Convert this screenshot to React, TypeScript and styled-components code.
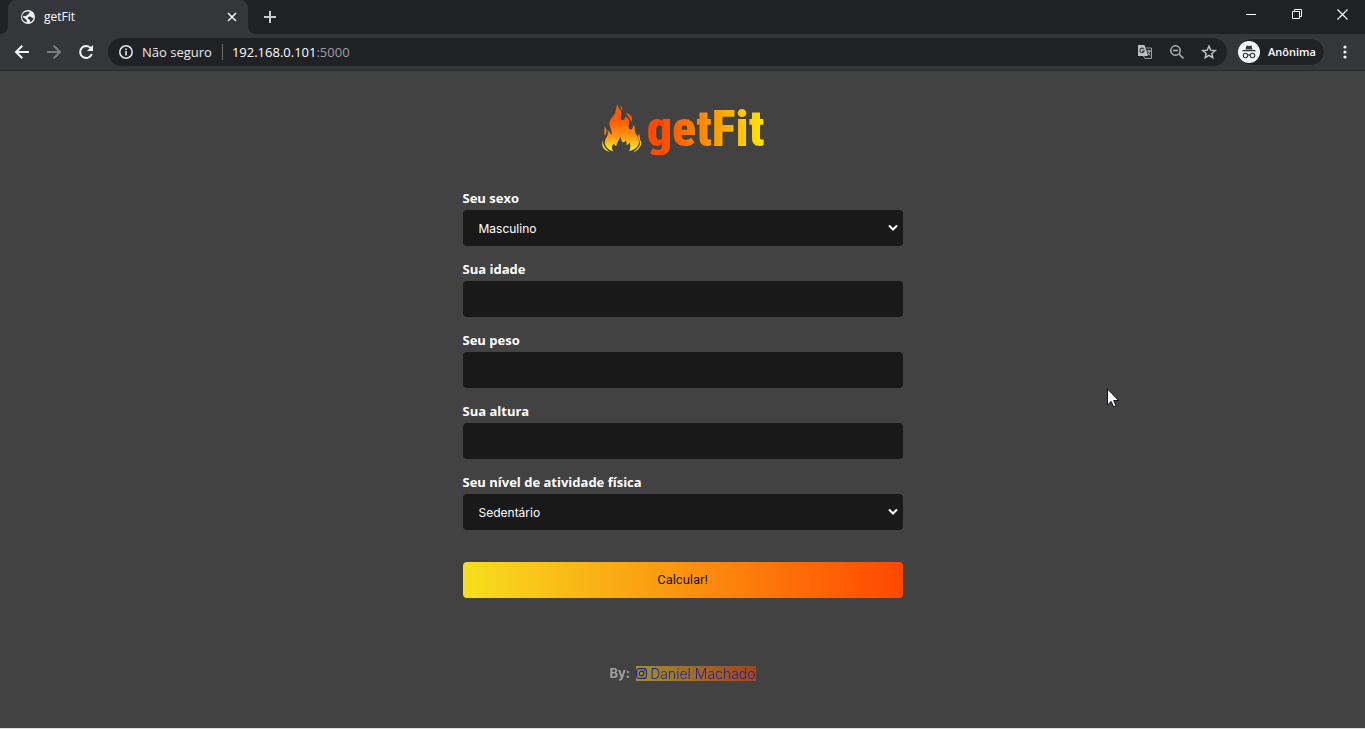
import React from 'react';
import styled, { createGlobalStyle } from 'styled-components';

const Global = createGlobalStyle`
  * { box-sizing: border-box; }
  html, body { margin: 0; background: #424242; }
  button, input, select { font: inherit; color: inherit; border: 0; margin: 0; }
  button { background: none; padding: 0; }
  svg { display: block; flex: none; }
`;

const Window = styled.div`
  position: relative;
  min-height: 100vh;
  display: flex;
  flex-direction: column;
  background: #424242;
  border-bottom: 1px solid #e0e0e0;
  font-family: Inter, sans-serif;
`;

const TabStrip = styled.div`
  height: 34px;
  display: flex;
  align-items: stretch;
  background: #202124;
  padding-left: 8px;
  color: #fff;
`;

const Tab = styled.div`
  position: relative;
  width: 240px;
  display: flex;
  align-items: center;
  padding: 0 11px 0 12px;
  gap: 8px;
  background: #35363a;
  border-radius: 8px 8px 0 0;
  font: 12px/16px "Open Sans", sans-serif;
  &::before, &::after {
    content: "";
    position: absolute;
    bottom: 0;
    width: 8px;
    height: 8px;
  }
  &::before { left: -8px; background: radial-gradient(circle at 0 0, #202124 8px, #35363a 8px); }
  &::after { right: -8px; background: radial-gradient(circle at 100% 0, #202124 8px, #35363a 8px); }
`;

const TabTitle = styled.span`
  flex: 1;
`;

const IconButton = styled.button<{ $w: number }>`
  width: ${(p) => p.$w}px;
  display: flex;
  align-items: center;
  justify-content: center;
`;

const WindowControls = styled.div`
  display: flex;
  margin-left: auto;
  height: 28px;
`;

const Toolbar = styled.div`
  height: 37px;
  display: flex;
  align-items: center;
  padding: 0 4px 0 6px;
  background: #35363a;
  border-bottom: 1px solid #28292b;
  color: #fff;
`;

const AddressBar = styled.div`
  flex: 1;
  height: 28px;
  margin-left: 6px;
  display: flex;
  align-items: center;
  padding: 0 2px 0 10px;
  border-radius: 14px;
  background: #202124;
  font: 13px/20px "Open Sans", sans-serif;
`;

const Security = styled.span`
  margin-left: 8px;
  padding-right: 10px;
  color: #e8eaed;
`;

const Divider = styled.span`
  width: 1px;
  height: 16px;
  background: #6b6c6f;
`;

const Url = styled.span`
  flex: 1;
  margin-left: 9px;
  span { color: #9aa0a6; }
`;

const Profile = styled.button`
  height: 28px;
  width: 88px;
  margin: 0 4px 0 10px;
  display: flex;
  align-items: center;
  gap: 8px;
  border-radius: 14px;
  background: #202124;
  border: 1px solid #3c3d41;
  font: 600 11px/16px "Open Sans", sans-serif;
`;

const Main = styled.main`
  flex: 1;
  width: 100%;
  max-width: 440px;
  margin: 0 auto;
  padding: 32px 0 16px;
  display: flex;
  flex-direction: column;
  color: #fff;
`;

const Logo = styled.h1`
  height: 56px;
  margin: 0 0 32px;
  padding-bottom: 4px;
  display: flex;
  align-items: center;
  justify-content: center;
  gap: 4px;
  font: 900 50px/52px "Roboto Condensed", Roboto, sans-serif;
`;

const LogoText = styled.span`
  background: linear-gradient(90deg, #ff4a00 12%, #ffe000 96%);
  background-clip: text;
  color: transparent;
`;

const Form = styled.form`
  display: flex;
  flex-direction: column;
  gap: 16px;
`;

const Field = styled.div`
  display: flex;
  flex-direction: column;
`;

const Label = styled.label`
  font: 700 13px/15px "Open Sans", sans-serif;
  padding-bottom: 4px;
`;

const controlHeight = '36px';

const Input = styled.input`
  width: 100%;
  height: ${controlHeight};
  padding: 0 16px;
  border-radius: 4px;
  background: #191919;
  font-size: 12px;
`;

const SelectBox = styled.div`
  display: grid;
  align-items: center;
  > * { grid-area: 1 / 1; }
  > svg { justify-self: end; margin-right: 5px; pointer-events: none; }
`;

const Select = styled.select`
  appearance: none;
  width: 100%;
  height: ${controlHeight};
  padding: 0 16px;
  border-radius: 4px;
  background: #191919;
  font-size: 12px;
`;

const Submit = styled.button`
  height: ${controlHeight};
  margin-top: 16px;
  border-radius: 4px;
  background: linear-gradient(90deg, #f7df1e, #ff4800);
  color: #191919;
  font: 13px/16px Roboto, sans-serif;
`;

const Credit = styled.footer`
  margin-top: 68px;
  display: flex;
  justify-content: center;
  gap: 6px;
  font-size: 13px;
  line-height: 15px;
  opacity: 0.5;
`;

const CreditLink = styled.a`
  display: flex;
  align-items: center;
  gap: 3px;
  color: #0000ee;
  font-weight: 300;
  font-size: 14px;
  text-decoration: none;
  background: linear-gradient(90deg, #f7df1e, #ff4800);
`;

const Pointer = styled.svg`
  position: absolute;
  left: 81.1%;
  top: 388px;
`;

const Chevron = () => (
  <svg width="10" height="8" viewBox="0 0 10 8" fill="none" stroke="#fff" strokeWidth="2">
    <path d="M1 1.5 5 5.5 9 1.5" />
  </svg>
);

const Flame = () => (
  <svg width="42" height="52" viewBox="0 0 42 52">
    <defs>
      <linearGradient id="fire" gradientUnits="userSpaceOnUse" x1="0" y1="0" x2="0" y2="50">
        <stop offset="0.35" stopColor="#ff5a05" />
        <stop offset="0.65" stopColor="#ff9210" />
        <stop offset="0.9" stopColor="#ffe21a" />
      </linearGradient>
    </defs>
    <g fill="url(#fire)">
      <path d="M17 1C16 5 20 6 20.500 10C20.800 12 19 14 20 16C21.500 18 24.500 17 24 13.500C28 15 29 18 28 21C27 24 28 27 30 26.500C32 26 32 24 32 21.500C35 24 33 27 34.500 30C36 33 38 35 38 39C38 43 34 47 28 48C30 45 29.500 42 28.500 39C28 41 27 42 25.500 42C26 40 25.500 38.500 24.500 37.500C23.500 39.500 22 40 21 38.500C20 37 20.500 35 19 33.500C19 37 15.500 39 15.500 43C14 43 13.500 42 13 40.500C10 43 10.500 46 12.500 48.500C7 47 3 43 4 38C4.500 34.500 8 33 6.500 27C9 29 9.500 31 10.500 32C11.500 29 9 25 8.500 21C8.200 17 11 14.500 13 12C16 8 14 5 17 1Z" />
      <path d="M3 23.500C6.500 26 6 29 3.800 32.500C2.500 29 4.500 27 3 23.500ZM2.500 37C1 41 4 45.500 9 49C2.500 47.500-1 42 2.500 37ZM38 30.500C39.500 34 38.500 37 40 38C41.500 43 36.500 48 32 49.500C37 45.500 40 42 38.800 39C38 36 36 34 38 30.500ZM25 10C31 11.500 32 15 30.500 19C29.500 15 26.500 13.500 25 10ZM19 2.500C21.500 4 22 6 21 8C20.500 6 19.500 4.500 19 2.500Z" />
    </g>
  </svg>
);

const selectFields = {
  sexo: ['Masculino', 'Feminino'],
  nivel: ['Sedentário', 'Moderado', 'Intenso'],
};

function SelectField({ id, label, options }: { id: string; label: string; options: string[] }) {
  return (
    <Field>
      <Label htmlFor={id}>{label}</Label>
      <SelectBox>
        <Select id={id}>{options.map((o) => <option key={o}>{o}</option>)}</Select>
        <Chevron />
      </SelectBox>
    </Field>
  );
}

function TextField({ id, label }: { id: string; label: string }) {
  return (
    <Field>
      <Label htmlFor={id}>{label}</Label>
      <Input id={id} type="text" />
    </Field>
  );
}

export default function App() {
  return (
    <Window>
      <Global />
      <TabStrip>
        <Tab>
          <svg width="16" height="16" viewBox="0 0 16 16">
            <circle cx="8" cy="8" r="7" fill="#f1f3f4" />
            <path d="M8 2.500c2 0 2 1 1 1.700s0 1.500-1.500 1.500-.5 1.500-1.500 1.500S3 6.500 2.700 8L6 10.500c1 1 .5 2 1.200 3C4 13 2 11 2 8S4 2.800 8 2.500Z" fill="#35363a" />
            <path d="M8 8.500c1-1.500 3.500-1 4 .5l1.500-.5c0 2.500-1.800 4-3.500 4.700.3-1.700 0-2.200-.8-2.700S7.400 9.700 8 8.500Z" fill="#35363a" />
          </svg>
          <TabTitle>getFit</TabTitle>
          <IconButton $w={10} aria-label="Fechar guia">
            <svg width="10" height="10" viewBox="0 0 10 10" stroke="#f1f3f4" strokeWidth="1.6"><path d="M1 1 9 9M9 1 1 9" /></svg>
          </IconButton>
        </Tab>
        <IconButton $w={44} aria-label="Nova guia">
          <svg width="12" height="12" viewBox="0 0 12 12" stroke="#c8cacd" strokeWidth="2"><path d="M6 0V12M0 6H12" /></svg>
        </IconButton>
        <WindowControls>
          <IconButton $w={46} aria-label="Minimizar">
            <svg width="10" height="10" viewBox="0 0 10 10" fill="#fff"><path d="M0 5h10v1H0z" /></svg>
          </IconButton>
          <IconButton $w={46} aria-label="Restaurar">
            <svg width="10" height="10" viewBox="0 0 10 10" fill="none" stroke="#fff"><path d="M.5 2.500h7v7h-7zM2.500 2.500v-2h7v7h-2" /></svg>
          </IconButton>
          <IconButton $w={45} aria-label="Fechar">
            <svg width="11" height="11" viewBox="0 0 11 11" stroke="#fff" strokeWidth="1.200"><path d="M.5.5l10 10M10.500.5l-10 10" /></svg>
          </IconButton>
        </WindowControls>
      </TabStrip>
      <Toolbar>
        <IconButton $w={32} aria-label="Voltar">
          <svg width="16" height="16" viewBox="0 0 16 16" fill="none" stroke="#f1f3f4" strokeWidth="2"><path d="M15 8H2M8.300 1.700 2 8l6.300 6.300" /></svg>
        </IconButton>
        <IconButton $w={32} aria-label="Avançar">
          <svg width="16" height="16" viewBox="0 0 16 16" fill="none" stroke="#7d7e81" strokeWidth="2"><path d="M1 8h13M7.700 1.700 14 8l-6.300 6.300" /></svg>
        </IconButton>
        <IconButton $w={32} aria-label="Recarregar">
          <svg width="16" height="16" viewBox="0 0 16 16"><path d="M12.800 4.200A6 6 0 1 0 13.800 10" fill="none" stroke="#f1f3f4" strokeWidth="2" /><path d="M15 1v6H9z" fill="#f1f3f4" /></svg>
        </IconButton>
        <AddressBar>
          <svg width="16" height="16" viewBox="0 0 16 16" fill="none" stroke="#e8eaed"><circle cx="8" cy="8" r="6.200" strokeWidth="1.500" /><path d="M8 7v4.500M8 4.500V6" strokeWidth="1.600" /></svg>
          <Security>Não seguro</Security>
          <Divider />
          <Url>192.168.0.101<span>:5000</span></Url>
          <IconButton $w={32} aria-label="Traduzir">
            <svg width="16" height="16" viewBox="0 0 16 16">
              <path d="M7 4h7.500v10.500H8L6 11" fill="none" stroke="#9a9b9e" strokeWidth="1" />
              <path d="M1 1h6.500l3.500 11H1z" fill="#bdbec1" />
              <path d="M7 5.200A2.200 2.200 0 1 0 7.200 7H5" fill="none" stroke="#35363a" strokeWidth="1.100" />
              <path d="M9.500 7H14M11.700 6v1M13 7c-.5 2-1.500 3-2.500 4M10.700 8.500l2.600 3" fill="none" stroke="#bdbec1" />
            </svg>
          </IconButton>
          <IconButton $w={32} aria-label="Zoom">
            <svg width="16" height="16" viewBox="0 0 16 16" fill="none" stroke="#b4b5b8" strokeWidth="1.500"><circle cx="6.500" cy="6.500" r="4.700" /><path d="M10 10l4.500 4.500M4 6.500h5" /></svg>
          </IconButton>
          <IconButton $w={32} aria-label="Favoritar">
            <svg width="16" height="16" viewBox="0 0 16 16" fill="none" stroke="#c4c5c8" strokeWidth="1.400"><path d="M8 2l1.700 4.100 4.500.4-3.400 2.900 1 4.300L8 11.400l-3.800 2.300 1-4.300-3.400-2.900 4.500-.4z" /></svg>
          </IconButton>
        </AddressBar>
        <Profile>
          <svg width="22" height="22" viewBox="0 0 22 22">
            <circle cx="11" cy="11" r="11" fill="#f1f3f4" />
            <path d="M7.500 8.500 8.500 4.500 11 5l2.500-.5 1 4zM4.500 9h13v1.300h-13z" fill="#35363a" />
            <g fill="none" stroke="#35363a" strokeWidth="1.100"><circle cx="7.500" cy="14.500" r="2.200" /><circle cx="14.500" cy="14.500" r="2.200" /><path d="M9.700 14.300q1.300-.8 2.600 0" /></g>
          </svg>
          Anônima
        </Profile>
        <IconButton $w={32} aria-label="Menu">
          <svg width="4" height="14" viewBox="0 0 4 14" fill="#f1f3f4"><circle cx="2" cy="2" r="1.600" /><circle cx="2" cy="7" r="1.600" /><circle cx="2" cy="12" r="1.600" /></svg>
        </IconButton>
      </Toolbar>
      <Main>
        <Logo><Flame /><LogoText>getFit</LogoText></Logo>
        <Form onSubmit={(e) => e.preventDefault()}>
          <SelectField id="sexo" label="Seu sexo" options={selectFields.sexo} />
          <TextField id="idade" label="Sua idade" />
          <TextField id="peso" label="Seu peso" />
          <TextField id="altura" label="Sua altura" />
          <SelectField id="nivel" label="Seu nível de atividade física" options={selectFields.nivel} />
          <Submit type="submit">Calcular!</Submit>
        </Form>
        <Credit>
          <b>By:</b>
          <CreditLink href="#instagram">
            <svg width="11" height="11" viewBox="0 0 11 11" fill="none" stroke="#0000ee" strokeWidth="1.200"><rect x=".6" y=".6" width="9.800" height="9.800" rx="2.500" /><circle cx="5.500" cy="5.500" r="2.300" /><path d="M8 2.600h1" /></svg>
            Daniel Machado
          </CreditLink>
        </Credit>
      </Main>
      <Pointer width="12" height="20" viewBox="0 0 12 20"><path d="M.5 1v16l3.700-3.600L6.500 18.800l2.500-1-2.300-5.300h5z" fill="#fff" stroke="#10101c" /></Pointer>
    </Window>
  );
}
